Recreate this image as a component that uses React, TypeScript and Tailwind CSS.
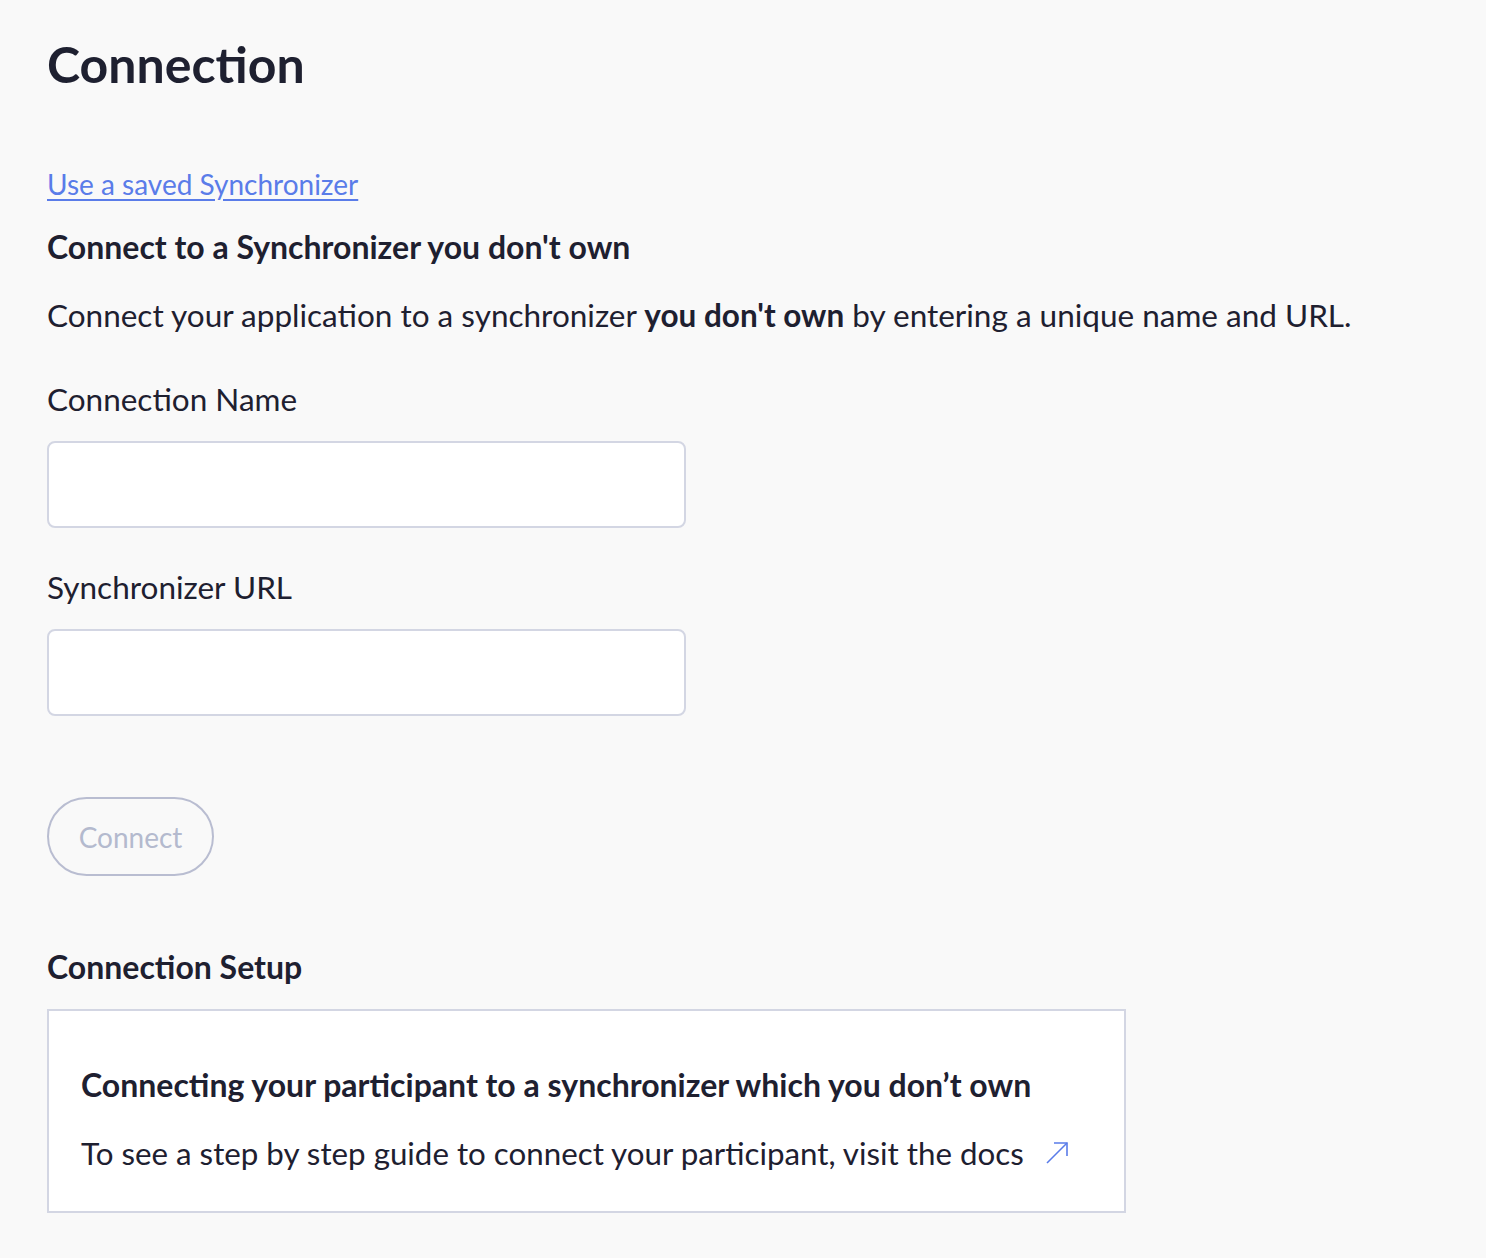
const font = { fontFamily: "Lato, 'Noto Sans', sans-serif" };

const Field = ({ label, id }: { label: string; id: string }) => (
  <div className="flex flex-col">
    <label htmlFor={id} className="text-[31.5px] leading-[40px] text-[#1e2030]">
      {label}
    </label>
    <input
      id={id}
      className="mt-[22px] h-[87px] w-[639px] rounded-[8px] border-2 border-[#d3d6e3] bg-white px-4 text-[28px] outline-none"
    />
  </div>
);

export default function App() {
  return (
    <div className="min-h-[1258px] bg-[#f9f9f9] px-[47px] pt-[34px] text-[#1e2030]" style={font}>
      <h1 className="text-[50px] font-bold leading-[60px]">Connection</h1>

      <a href="#" className="mt-[72px] block w-fit text-[28px] leading-[36px] text-[#5a7ce9] underline underline-offset-4">
        Use a saved Synchronizer
      </a>

      <h2 className="mt-[27px] text-[32px] font-bold leading-[36px]">Connect to a Synchronizer you don't own</h2>

      <p className="mt-[30px] text-[31.5px] leading-[40px]">
        Connect your application to a synchronizer <span className="font-bold">you don't own</span> by entering a unique name and URL.
      </p>

      <div className="mt-[44px] flex flex-col gap-[39px]">
        <Field label="Connection Name" id="name" />
        <Field label="Synchronizer URL" id="url" />
      </div>

      <button className="mt-[81px] h-[79px] w-[167px] rounded-full border-2 border-[#b9bdd1] text-[28px] text-[#b4bace]">
        Connect
      </button>

      <h3 className="mt-[73px] text-[32px] font-bold leading-[36px]">Connection Setup</h3>

      <div className="mt-[24px] w-[1079px] border-2 border-[#d3d6e3] bg-white px-[32px] pb-[38px] pt-[54px]">
        <h4 className="text-[32px] font-bold leading-[40px]">Connecting your participant to a synchronizer which you don’t own</h4>
        <p className="mt-[28px] flex items-center text-[31.3px] leading-[40px]">
          To see a step by step guide to connect your participant, visit the docs
          <a href="#" className="ml-[22px] text-[#5a7ce9]">
            <svg width="22" height="22" viewBox="0 0 22 22" fill="none" stroke="currentColor" strokeWidth="1.6">
              <path d="M1 21 L21 1" />
              <path d="M8 1 H21 V14" />
            </svg>
          </a>
        </p>
      </div>
    </div>
  );
}
